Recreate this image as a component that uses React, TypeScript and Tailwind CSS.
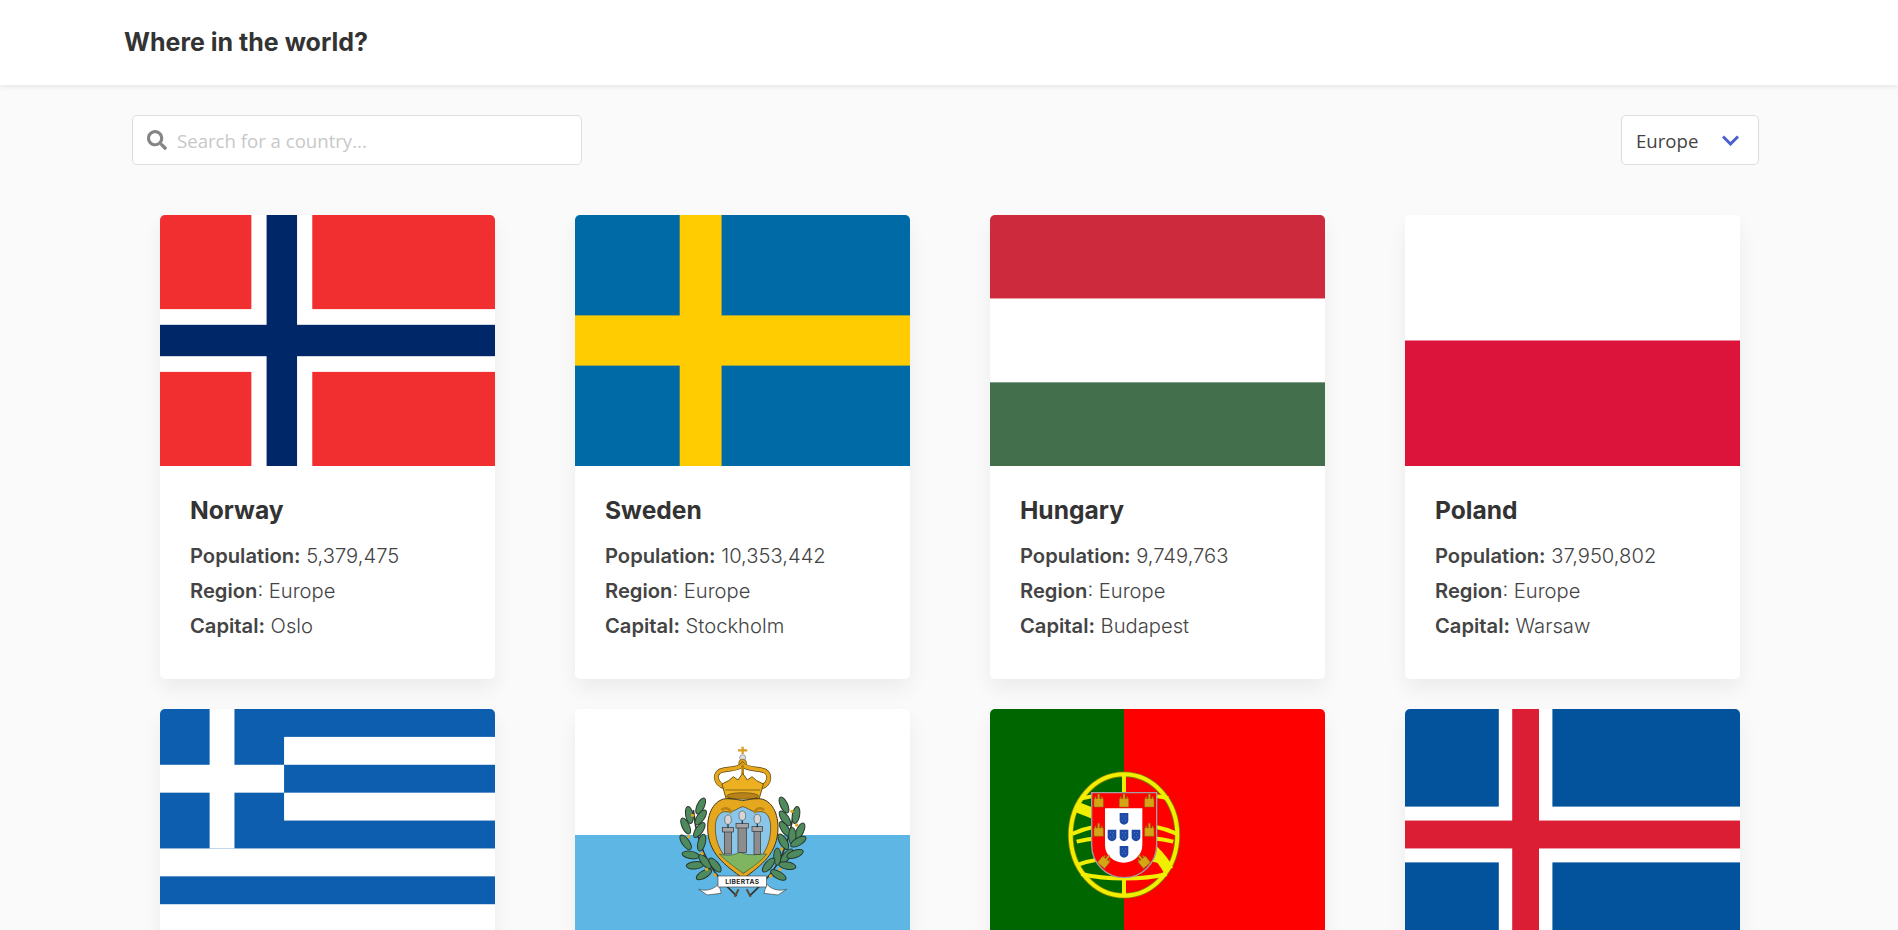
import type { ReactNode } from "react";
import { FaSearch } from "react-icons/fa";

function Flag({ box, children }: { box: string; children: ReactNode }) {
  return (
    <svg viewBox={box} preserveAspectRatio="none" className="block h-[251px] w-[335px]">
      {children}
    </svg>
  );
}

const Norway = () => (
  <Flag box="0 0 22 16">
    <rect width="22" height="16" fill="#f12e30" />
    <rect x="6" width="4" height="16" fill="#fff" />
    <rect y="6" width="22" height="4" fill="#fff" />
    <rect x="7" width="2" height="16" fill="#002868" />
    <rect y="7" width="22" height="2" fill="#002868" />
  </Flag>
);

const Sweden = () => (
  <Flag box="0 0 16 10">
    <rect width="16" height="10" fill="#006aa7" />
    <rect x="5" width="2" height="10" fill="#fecc00" />
    <rect y="4" width="16" height="2" fill="#fecc00" />
  </Flag>
);

const Hungary = () => (
  <Flag box="0 0 6 3">
    <rect width="6" height="1" fill="#cd2a3e" />
    <rect y="1" width="6" height="1" fill="#fff" />
    <rect y="2" width="6" height="1" fill="#436f4d" />
  </Flag>
);

const Poland = () => (
  <Flag box="0 0 8 5">
    <rect width="8" height="2.5" fill="#fff" />
    <rect y="2.5" width="8" height="2.5" fill="#dc143c" />
  </Flag>
);

const Greece = () => (
  <Flag box="0 0 27 18">
    <rect width="27" height="18" fill="#0d5eaf" />
    <rect x="10" y="2" width="17" height="2" fill="#fff" />
    <rect x="10" y="6" width="17" height="2" fill="#fff" />
    <rect y="10" width="27" height="2" fill="#fff" />
    <rect y="14" width="27" height="2" fill="#fff" />
    <rect x="4" width="2" height="10" fill="#fff" />
    <rect y="4" width="10" height="2" fill="#fff" />
  </Flag>
);

const Iceland = () => (
  <Flag box="0 0 25 18">
    <rect width="25" height="18" fill="#02529c" />
    <rect x="7" width="4" height="18" fill="#fff" />
    <rect y="7" width="25" height="4" fill="#fff" />
    <rect x="8" width="2" height="18" fill="#dc1e35" />
    <rect y="8" width="25" height="2" fill="#dc1e35" />
  </Flag>
);

// leaves of the San Marino wreath: x, y, angle
const leaves = [
  [182, 228, 25], [148, 255, -10], [182, 262, 35], [137, 288, -25], [178, 300, 35],
  [137, 337, -35], [185, 338, 15], [152, 375, -80], [165, 406, -95], [192, 433, -120],
  [195, 395, -40], [225, 405, -40], [432, 225, -25], [468, 255, 10], [435, 265, -35],
  [480, 303, 25], [435, 297, -35], [457, 318, 0], [430, 335, -30], [475, 335, 60],
  [412, 380, 0], [440, 378, 40], [465, 372, 70], [442, 407, 100], [386, 405, 40], [415, 435, 120],
];

const SanMarino = () => (
  <Flag box="0 0 335 251">
    <rect width="335" height="126" fill="#fff" />
    <rect y="126" width="335" height="125" fill="#5eb6e4" />
    {/* drawn in the coordinates of a 3x crop of the flag */}
    <g transform="translate(65 21) scale(0.3333)">
      <path d="M290 498C240 450 175 390 160 240M328 498C380 450 440 400 462 240" fill="none" stroke="#33322a" strokeWidth="5" />
      {leaves.map(([x, y, a]) => (
        <ellipse key={`${x}-${y}`} cx={x} cy={y} rx="11" ry="26" transform={`rotate(${a} ${x} ${y})`} fill="#4f8a5f" stroke="#24382b" strokeWidth="3" />
      ))}
      {[[158, 256], [146, 320], [186, 370], [200, 418], [225, 435], [456, 244], [470, 285], [425, 357], [420, 418], [392, 438]].map(([x, y]) => (
        <circle key={`${x}-${y}`} cx={x} cy={y} r="5" fill="#e5a71e" />
      ))}
      <path d="M308 50V72M294 61H322" stroke="#d99f22" strokeWidth="7" />
      <circle cx="308" cy="83" r="9" fill="#ddd" stroke="#777" strokeWidth="2" />
      <circle cx="308" cy="100" r="12" fill="#e5a71e" stroke="#6b5312" strokeWidth="2" />
      <path d="M258 172C222 162 220 125 250 120C275 115 295 118 308 104C322 118 345 115 365 120C394 125 394 162 360 172" fill="none" stroke="#5f4a12" strokeWidth="15" />
      <path d="M258 172C222 162 220 125 250 120C275 115 295 118 308 104C322 118 345 115 365 120C394 125 394 162 360 172" fill="none" stroke="#e5a71e" strokeWidth="11" />
      <path d="M308 104V135" stroke="#b7820f" strokeWidth="8" />
      <path d="M246 162L266 152L280 140L294 150L308 130L322 150L336 140L350 152L370 162L358 205H258Z" fill="#edb021" stroke="#6b5312" strokeWidth="3" />
      <path d="M256 180H360" stroke="#8a6a17" strokeWidth="3" />
      <ellipse cx="308" cy="198" rx="48" ry="10" fill="#b7821a" stroke="#5f4a12" strokeWidth="2" />
      <path d="M310 446C255 405 203 370 203 292C203 240 230 205 262 206C285 207 298 210 308 212C320 210 335 206 355 206C388 206 414 240 414 292C414 370 365 405 310 446Z" fill="#e5a71e" stroke="#3f3312" strokeWidth="3" />
      <path d="M310 430C265 395 226 362 226 292C226 262 240 245 255 245C280 250 295 232 308 230C322 232 338 250 362 245C380 245 392 262 392 292C392 362 355 395 310 430Z" fill="#8ac6ea" stroke="#3f3312" strokeWidth="2" />
      <path d="M310 430C280 410 250 385 238 372C262 378 278 378 300 366C322 380 352 372 380 372C365 392 340 410 310 430Z" fill="#7fb561" stroke="#3f5a30" strokeWidth="2" />
      <path d="M244 240C260 228 275 240 270 250M372 240C358 228 342 240 346 250" fill="none" stroke="#b7820f" strokeWidth="8" />
      {[[264, 34, 372, 252], [307, 38, 368, 240], [352, 32, 374, 250]].map(([x, w, b, top]) => (
        <g key={x}>
          <rect x={x - w / 2 + 6} y={top + 48} width={w - 12} height={b - top - 48} fill="#8d8d8d" stroke="#333" strokeWidth="2" />
          <rect x={x - w / 2} y={top + 40} width={w} height="14" fill="#a5a5a5" stroke="#333" strokeWidth="2" />
          <rect x={x - 2} y={top + 20} width="4" height="22" fill="#333" />
          <ellipse cx={x} cy={top + 17} rx="10" ry="14" fill="#d6d6d6" stroke="#555" strokeWidth="2" />
        </g>
      ))}
      <path d="M176 478C195 484 220 480 236 462L244 490L202 495ZM440 478C420 484 395 480 380 462L372 490L414 495Z" fill="#fff" stroke="#444" strokeWidth="2" />
      <rect x="234" y="438" width="146" height="33" fill="#fff" stroke="#444" strokeWidth="2" />
      <path d="M296 478L284 500M320 478L332 500" stroke="#5f4a32" strokeWidth="6" />
      <text x="307" y="462" textAnchor="middle" fontSize="20" fontWeight="700" letterSpacing="1" fill="#222" fontFamily="Inter, sans-serif">LIBERTAS</text>
    </g>
  </Flag>
);

const Castle = ({ x, y, r = 0 }: { x: number; y: number; r?: number }) => (
  <g transform={`translate(${x} ${y}) rotate(${r})`}>
    <path d="M-14 19V-6H-11V-12H-8V-6H-3V-20H3V-6H8V-12H11V-6H14V19Z" fill="#d4a514" stroke="#8c6c10" strokeWidth="1.5" />
  </g>
);

const Quina = ({ x, y }: { x: number; y: number }) => (
  <g transform={`translate(${x} ${y})`}>
    <path d="M-13 -17H13V6C13 13 6 17 0 18C-6 17 -13 13 -13 6Z" fill="#1c4aa5" />
    <path d="M-6 -8H-5M6 -8H5M0 -1H1M-6 6H-5M6 6H5" stroke="#dfe7f7" strokeWidth="3" />
  </g>
);

const Portugal = () => (
  <Flag box="0 0 335 251">
    <rect width="134" height="251" fill="#006600" />
    <rect x="134" width="201" height="251" fill="#ff0000" />
    <g transform="translate(50 21) scale(0.3333)" fill="none">
      <ellipse cx="252" cy="315" rx="160" ry="182" stroke="#7d7d00" strokeWidth="17" />
      <g stroke="#f2ee00" strokeWidth="12">
        <ellipse cx="252" cy="315" rx="160" ry="182" />
        <path d="M252 130V498" />
        <path d="M96 312C190 270 320 270 412 312M110 335C190 315 320 315 400 335M112 405C190 375 320 375 396 405M124 432C200 450 310 450 380 432M125 205C190 190 320 190 385 205" />
        <path d="M112 232C190 260 340 330 385 420" strokeWidth="32" />
      </g>
      <path d="M155 188H350V345C350 400 305 443 252 443C200 443 155 400 155 345Z" fill="#ff0000" stroke="#a0a0a0" strokeWidth="4" />
      <path d="M195 235H307V345C307 375 282 398 251 398C220 398 195 375 195 345Z" fill="#fff" />
      <Castle x={176} y={212} />
      <Castle x={252} y={212} />
      <Castle x={328} y={212} />
      <Castle x={176} y={300} />
      <Castle x={328} y={300} />
      <Castle x={195} y={392} r={40} />
      <Castle x={309} y={392} r={-40} />
      <Quina x={252} y={266} />
      <Quina x={216} y={316} />
      <Quina x={252} y={316} />
      <Quina x={288} y={316} />
      <Quina x={252} y={365} />
    </g>
  </Flag>
);

type Country = { name: string; flag: ReactNode; population?: string; capital?: string };

const countries: Country[] = [
  { name: "Norway", flag: <Norway />, population: "5,379,475", capital: "Oslo" },
  { name: "Sweden", flag: <Sweden />, population: "10,353,442", capital: "Stockholm" },
  { name: "Hungary", flag: <Hungary />, population: "9,749,763", capital: "Budapest" },
  { name: "Poland", flag: <Poland />, population: "37,950,802", capital: "Warsaw" },
  { name: "Greece", flag: <Greece /> },
  { name: "San Marino", flag: <SanMarino /> },
  { name: "Portugal", flag: <Portugal /> },
  { name: "Iceland", flag: <Iceland /> },
];

function CountryCard({ country }: { country: Country }) {
  return (
    <div className="h-[464px] overflow-hidden rounded-[5px] bg-white shadow-[0_10px_20px_rgba(0,0,0,0.06)]">
      {country.flag}
      {country.population && (
        <div className="px-[30px] pt-[28px]">
          <h2 className="text-[24.6px] leading-[32px] font-bold text-[#333]">{country.name}</h2>
          <div className="mt-[12px] text-[20.2px] leading-[35px] font-light text-[#444]">
            <p><b className="font-semibold">Population:</b> {country.population}</p>
            <p><b className="font-semibold">Region</b>: Europe</p>
            <p><b className="font-semibold">Capital:</b> {country.capital}</p>
          </div>
        </div>
      )}
    </div>
  );
}

export default function App() {
  return (
    <div className="h-[930px] overflow-hidden bg-[#fafafa] font-['Inter',sans-serif]">
      <header className="relative flex h-[85px] items-center bg-white pl-[124px] shadow-[0_2px_5px_rgba(0,0,0,0.08)]">
        <h1 className="text-[25px] font-bold text-[#333]">Where in the world?</h1>
      </header>

      <main className="pt-[30px]">
        <div className="flex justify-between pr-[139px] pl-[132px] font-['Open_Sans',sans-serif]">
          <div className="flex h-[50px] w-[450px] items-center gap-[10px] rounded-[5px] border border-[#ddd] bg-white pl-[14px]">
            <FaSearch className="h-[20px] w-[20px] text-[#858585]" />
            <input
              placeholder="Search for a country..."
              className="flex-1 bg-transparent pt-[2px] text-[18.6px] outline-none placeholder:text-[#c8c8c8]"
            />
          </div>
          <div className="flex h-[50px] w-[138px] items-center justify-between rounded-[5px] border border-[#ddd] bg-white pr-[19px] pl-[14px] text-[18.6px] text-[#444]">
            <span className="pt-[1px]">Europe</span>
            <svg viewBox="0 0 17 11" className="h-[11px] w-[17px]" fill="none" stroke="#4a5fd0" strokeWidth="3">
              <path d="M1 1.5L8.5 9L16 1.5" />
            </svg>
          </div>
        </div>

        <div className="mt-[50px] grid grid-cols-[repeat(4,335px)] gap-x-[80px] gap-y-[30px] pl-[160px]">
          {countries.map((c) => (
            <CountryCard key={c.name} country={c} />
          ))}
        </div>
      </main>
    </div>
  );
}
